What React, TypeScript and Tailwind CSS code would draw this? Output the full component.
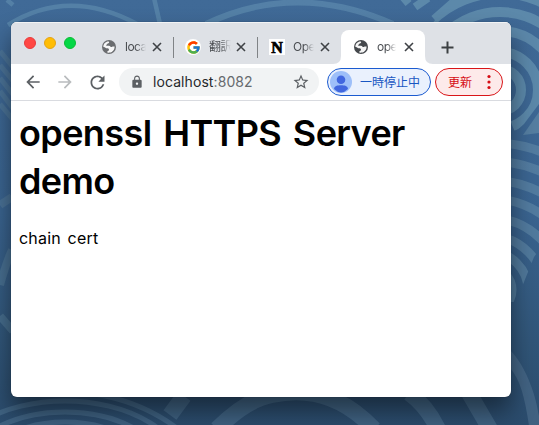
import type { ReactNode } from "react";
import { MdArrowBack, MdArrowForward, MdLock, MdRefresh, MdStarBorder } from "react-icons/md";
import { FcGoogle } from "react-icons/fc";

const rings = (cx: number, cy: number, radii: number[], width: number) =>
  radii.map((r) => <circle key={r} cx={cx} cy={cy} r={r} strokeWidth={width} />);

function Wallpaper() {
  return (
    <svg className="absolute inset-0" width="539" height="425" viewBox="0 0 539 425">
      <defs>
        <linearGradient id="shade" x1="0" y1="0" x2="0" y2="1">
          <stop offset="0" stopColor="#406a97" />
          <stop offset="0.5" stopColor="#3a6490" />
          <stop offset="0.8" stopColor="#315679" />
          <stop offset="1" stopColor="#2b4c6d" />
        </linearGradient>
        <clipPath id="upper"><path d="M452 0H539V104L524 124L515 132L509 118V24L430 26Z" /></clipPath>
        <clipPath id="lower"><path d="M505 134L539 132V250L534 257L526 277L516 302H505Z" /></clipPath>
        <clipPath id="bottomLeft"><path d="M0 393H150L182 426H0Z" /></clipPath>
      </defs>
      <rect width="539" height="425" fill="url(#shade)" />
      <g opacity="0.45" fill="none" stroke="#6d9cba">
        <path d="M8 25Q68 -13 137 24M154 -2L160 24M7 0L13 5" strokeWidth="4.5" />
        <path d="M206 24Q296 -19 393 24" strokeWidth="6" />
      </g>
      <g opacity="0.66" fill="none" stroke="#6b99b5">
        <path d="M403 3L409 -2M415 7L428 -2M434 19L458 -2" strokeWidth="8" />
        <g clipPath="url(#upper)">{rings(500, 90, [21, 38, 59, 78, 97], 10)}</g>
      </g>
      <path d="M523 135L539 112V133Z" fill="#5f89a7" opacity="0.7" />
      <g opacity="0.55" fill="none" stroke="#668fab" clipPath="url(#lower)">
        {rings(490, 290, [22, 38, 54, 72, 91.5, 110, 129, 147.5], 9)}
      </g>
      <path d="M510 350C524 364 535 390 539 416V426H529C525 398 520 379 510 368Z" fill="#557693" opacity="0.5" />
      <g fill="none" stroke="#587f9c" opacity="0.5">
        <path d="M0 51L13 67M0 65L14 82M0 78L15 97M0 91L15 111M0 104L15 122" strokeWidth="5" />
        <path d="M0 205L12 197M0 285Q7 260 12 250M0 316L13 331" strokeWidth="8" />
      </g>
      <g fill="none" stroke="#6085a3" opacity="0.38">
        <g clipPath="url(#bottomLeft)">
          <ellipse cx="65" cy="475" rx="120" ry="74" strokeWidth="5" />
          <ellipse cx="65" cy="475" rx="103" ry="63" strokeWidth="5" />
          <ellipse cx="65" cy="475" rx="86" ry="53" strokeWidth="5" />
          <path d="M95 394Q143 402 178 429" strokeWidth="5" />
        </g>
        <path d="M184 396L170 415" strokeWidth="16" />
        <path d="M217 429Q246 400 272 395Q330 382 374 429M409 393Q427 406 438 429M469 393L490 429" strokeWidth="16" />
      </g>
    </svg>
  );
}

function Globe({ color }: { color: string }) {
  return (
    <svg width="14" height="14" viewBox="0 0 14 14">
      <circle cx="7" cy="7" r="7" fill={color} />
      <path d="M6.8 1.5C7.8 2.6 6.7 3.1 5.8 3.4C5 3.7 5.3 4.3 4.4 4.7C3.7 5 4.2 5.7 5 5.7H7.2C8.4 5.8 8.3 7 9.4 7.1C10.4 7.2 10.1 6.4 11 6.4H12.6C12.7 9.4 10.7 12.1 7.7 12.6C5.8 12.9 4.9 12.2 5.4 11.4C5.8 10.7 7 11 7 9.8C7 8.3 5.9 8.4 4.8 8.3C3.5 8.2 3.7 7.2 1.3 6.7C1.4 3.7 3.8 1.3 6.8 1.5Z" fill="#fff" opacity="0.94" />
      <path d="M7.2 1.4L9 1.8V3.3L7.5 4.2V5.5L9.1 6H12.4C12.1 3.7 9.7 1.4 7.2 1.4Z" fill={color} />
    </svg>
  );
}

function Cross() {
  return (
    <svg className="shrink-0" width="10" height="10" viewBox="0 0 10 10">
      <path d="M1 1L9 9M9 1L1 9" stroke="#3f4246" strokeWidth="1.6" />
    </svg>
  );
}

function Tab({ icon, label, active = false }: { icon: ReactNode; label: string; active?: boolean }) {
  return (
    <div className={`relative flex h-[34px] w-[84px] shrink-0 items-center ${active ? "rounded-t-lg bg-white" : ""}`}>
      {active && (
        <svg className="absolute -left-2 bottom-0" width="100" height="8" viewBox="0 0 100 8">
          <path d="M0 8Q8 8 8 0V8ZM92 0Q92 8 100 8H92Z" fill="white" />
        </svg>
      )}
      <div className="ml-3 flex w-4 shrink-0 justify-center">{icon}</div>
      <div className="ml-2 flex w-[27px] shrink-0">
        <span className="whitespace-nowrap bg-linear-to-r from-[#45484c] from-50% to-transparent to-95% bg-clip-text font-['Inter','Noto_Sans_CJK_JP',sans-serif] text-[12px] leading-5 tracking-[-0.5px] text-transparent">
          {label}
        </span>
      </div>
      <Cross />
    </div>
  );
}

function Separator() {
  return <div className="-mr-px h-[21px] w-px shrink-0 bg-[#808386]" />;
}

export default function App() {
  return (
    <div className="relative h-[425px] w-[539px] overflow-hidden bg-[#365e87] font-['Inter','Noto_Sans_CJK_JP',sans-serif]">
      <Wallpaper />
      <main className="relative ml-[11px] mt-[22px] flex h-[375px] w-[500px] flex-col overflow-clip rounded-md bg-white shadow-[0_14px_24px_rgba(0,0,0,0.46),0_0_1px_rgba(0,0,0,0.5)]">
        <div className="flex h-[42px] shrink-0 items-end border-t border-[#f2f3f4] bg-[#dee1e6]">
          <div className="mb-[15px] ml-[13px] flex w-[65px] gap-2">
            <i className="size-3 shrink-0 rounded-full border border-[#e83b3c] bg-[#ff4744]" />
            <i className="size-3 shrink-0 rounded-full border border-[#e5a314] bg-[#ffbd05]" />
            <i className="size-3 shrink-0 rounded-full border border-[#0bbc34] bg-[#04d746]" />
          </div>
          <div className="flex items-center">
            <Tab icon={<Globe color="#6b6d70" />} label="loca" />
            <Separator />
            <Tab icon={<span className="flex size-4 items-center justify-center rounded-full bg-white"><FcGoogle size={15} /></span>} label="翻訳" />
            <Separator />
            <Tab icon={<span className="flex h-4 w-4 items-center justify-center bg-white pt-px font-['Liberation_Serif',serif] text-[16px] font-black leading-none text-black [-webkit-text-stroke:0.7px_black]">N</span>} label="Ope" />
            <Tab icon={<Globe color="#45484c" />} label="ope" active />
          </div>
          <svg className="mb-[10px] ml-4" width="13" height="13" viewBox="0 0 13 13"><path d="M6.5 0.5V12.5M0.5 6.5H12.5" stroke="#3c4043" strokeWidth="2" /></svg>
        </div>

        <div className="flex h-[37px] shrink-0 items-center border-b border-[#d9dbe0] bg-white">
          <MdArrowBack size={20} className="ml-3 text-[#5c6064]" />
          <MdArrowForward size={20} className="ml-3 text-[#b9bcbe]" />
          <MdRefresh size={21} className="ml-3 text-[#5c6064]" />
          <div className="ml-[11px] flex h-7 w-[200px] shrink-0 items-center rounded-full bg-[#f1f3f4]">
            <MdLock size={14} className="ml-[11px] text-[#5c6064]" />
            <span className="ml-[9px] text-[14px] leading-5 tracking-[0.08px] text-[#25282b]">localhost<span className="text-[#666a6e]">:8082</span></span>
            <MdStarBorder size={18} className="ml-auto mr-[9px] text-[#5c6064]" />
          </div>
          <div className="ml-2 flex h-7 w-[104px] shrink-0 items-center rounded-full border border-[#1b5bd0] bg-[#eaf1fd]">
            <svg className="ml-[2px]" width="22" height="22" viewBox="0 0 22 22">
              <circle cx="11" cy="11" r="11" fill="#9dbff9" />
              <circle cx="11" cy="8.7" r="4.3" fill="#4167df" />
              <path d="M4 18C4.3 14.9 7.2 14.3 11 14.3S17.7 14.9 18 18Q11 25 4 18Z" fill="#4167df" />
            </svg>
            <span className="ml-2 whitespace-nowrap font-['Noto_Sans_CJK_JP',sans-serif] text-[12px] leading-5 text-[#1957c2]">一時停止中</span>
          </div>
          <div className="ml-1 flex h-7 w-[68px] shrink-0 items-center rounded-full border border-[#d91518] bg-[#fdeaea]">
            <span className="ml-3 whitespace-nowrap font-['Noto_Sans_CJK_JP',sans-serif] text-[12px] leading-5 text-[#d60c13]">更新</span>
            <svg className="ml-[15px]" width="4" height="16" viewBox="0 0 4 16" fill="#d60c13"><circle cx="2" cy="2.5" r="1.6" /><circle cx="2" cy="8" r="1.6" /><circle cx="2" cy="13.5" r="1.6" /></svg>
          </div>
        </div>

        <article className="px-2 pt-2 text-black">
          <h1 className="text-[36px] font-semibold leading-[48px] tracking-[-0.6px] [word-spacing:3.2px]">openssl HTTPS Server<br />demo</h1>
          <p className="mt-[21px] text-[16px] leading-6 tracking-[0.2px] [word-spacing:2px]">chain cert</p>
        </article>
      </main>
    </div>
  );
}
